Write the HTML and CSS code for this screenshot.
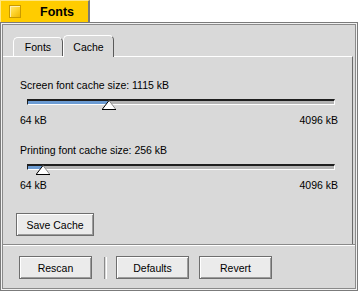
FILE: index.html
```html
<!DOCTYPE html>
<html lang="en">
<head>
<meta charset="UTF-8">
<title>Fonts</title>
<link rel="stylesheet" href="styles.css">
</head>
<body>
  <div class="titletab">
    <span class="ticon"></span>
    <span class="ttext">Fonts</span>
  </div>

  <div class="window">
    <div class="inner">
      <div class="tabs">
        <div class="tab">Fonts</div>
        <div class="tab active">Cache</div>
      </div>

      <div class="panel">
        <div class="setting first">
          <div class="label">Screen font cache size: 1115 kB</div>
          <div class="slider">
            <div class="fill" style="width: 80px"></div>
            <svg class="thumb" style="left: 74px" width="14" height="10" viewBox="0 0 14 10">
              <polygon points="7,0.5 0.5,9 13.5,9" fill="#fff"/>
              <line x1="7" y1="0.5" x2="0.5" y2="9" stroke="#000"/>
              <line x1="7" y1="0.5" x2="13.5" y2="9" stroke="#888"/>
              <line x1="0" y1="9.5" x2="14" y2="9.5" stroke="#000"/>
            </svg>
          </div>
          <div class="range"><span>64 kB</span><span>4096 kB</span></div>
        </div>

        <div class="setting">
          <div class="label">Printing font cache size: 256 kB</div>
          <div class="slider">
            <div class="fill" style="width: 14px"></div>
            <svg class="thumb" style="left: 8px" width="14" height="10" viewBox="0 0 14 10">
              <polygon points="7,0.5 0.5,9 13.5,9" fill="#fff"/>
              <line x1="7" y1="0.5" x2="0.5" y2="9" stroke="#000"/>
              <line x1="7" y1="0.5" x2="13.5" y2="9" stroke="#888"/>
              <line x1="0" y1="9.5" x2="14" y2="9.5" stroke="#000"/>
            </svg>
          </div>
          <div class="range"><span>64 kB</span><span>4096 kB</span></div>
        </div>

        <button class="btn save">Save Cache</button>
      </div>

      <div class="actions">
        <button class="btn">Rescan</button>
        <span class="divider"></span>
        <button class="btn">Defaults</button>
        <button class="btn">Revert</button>
      </div>
    </div>
  </div>
</body>
</html>
```

FILE: styles.css
```css
body {
margin: 0;
background-color: #fff;
font-family: "Liberation Sans", Arial, sans-serif;
font-size: 10.5px;
color: #000;
}

.titletab {
width: 90px;
height: 22px;
box-sizing: border-box;
background-color: #ffcc00;
border-top: 1px solid #ffe680;
border-left: 1px solid #ffe680;
border-right: 2px solid #7a7a7a;
display: flex;
align-items: center;
}

.ticon {
width: 12px;
height: 13px;
box-sizing: border-box;
margin-left: 8px;
border: 1px solid #c99a00;
background: linear-gradient(135deg, #ffe680 0%, #ffd633 45%, #f0b800 100%);
box-shadow: inset 1px 1px 0 #fff0b0;
}

.ttext {
margin-left: 19px;
font-size: 12.5px;
font-weight: bold;
}

.window {
width: 358px;
height: 269px;
box-sizing: border-box;
border: 1px solid #7b7b7b;
padding: 1px;
background-color: #f2f2f2;
}

.inner {
height: 100%;
box-sizing: border-box;
border: 1px solid #8a8a8a;
background-color: #d9d9d9;
padding-top: 10px;
display: flex;
flex-direction: column;
}

.tabs {
display: flex;
align-items: flex-end;
padding-left: 10px;
position: relative;
z-index: 1;
}

.tab {
height: 19px;
width: 50px;
box-sizing: border-box;
border-top: 1px solid #fff;
border-left: 1px solid #fff;
border-right: 1px solid #5a5a5a;
border-radius: 5px 5px 0 0;
display: flex;
align-items: center;
justify-content: center;
}

.tab.active {
height: 22px;
width: 51px;
margin-bottom: -1px;
background-color: #d9d9d9;
}

.panel {
border-top: 1px solid #fff;
border-right: 1px solid #6a6a6a;
margin-right: 2px;
padding: 0 14px 0 13px;
height: 188px;
box-sizing: border-box;
}

.setting {
margin-top: 18px;
}

.setting.first {
margin-top: 22px;
}

.label, .range {
margin-left: 4px;
line-height: 12px;
}

.range {
display: flex;
justify-content: space-between;
margin-top: 9px;
}

.slider {
position: relative;
margin: 8px 3px 0 11px;
height: 6px;
box-sizing: border-box;
border-top: 2px solid #1e1e1e;
border-left: 1px solid #1e1e1e;
border-right: 1px solid #fff;
border-bottom: 1px solid #fff;
background-color: #b3b3b3;
}

.fill {
height: 100%;
background-color: #6b9bd2;
}

.thumb {
position: absolute;
top: -1px;
display: block;
}

.btn {
font-family: "Liberation Sans", Arial, sans-serif;
font-size: 10.5px;
color: #000;
height: 23px;
width: 73px;
padding: 0;
box-sizing: border-box;
background-color: #ebebeb;
border: 1px solid #6e6e6e;
box-shadow: inset 1px 1px 0 #fff, inset -1px -1px 0 #9c9c9c;
}

.save {
width: 78px;
margin-top: 22px;
}

.actions {
border-top: 1px solid #8a8a8a;
box-shadow: inset 0 1px 0 #fff;
display: flex;
align-items: center;
gap: 10px;
padding: 11px 0 0 16px;
}

.divider {
width: 1px;
height: 22px;
border-left: 1px solid #8a8a8a;
border-right: 1px solid #fff;
margin: 0 -1px 0 2px;
}
```
